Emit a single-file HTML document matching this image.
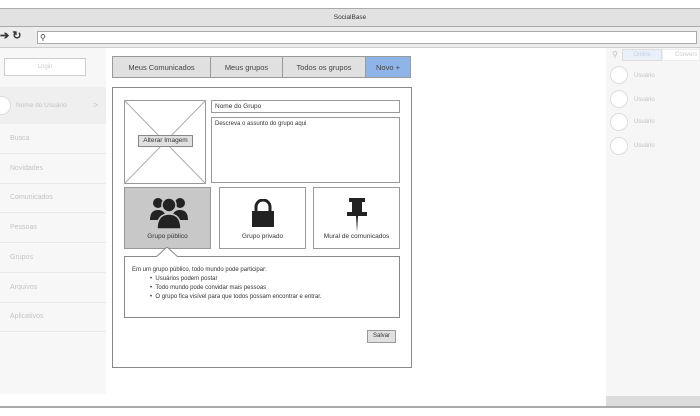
<!DOCTYPE html>
<html><head><style>
*{box-sizing:border-box;margin:0;padding:0}
body{width:700px;height:416px;background:#fff;font-family:"Liberation Sans",sans-serif;position:relative;overflow:hidden;font-size:7px;color:#333}
.a{position:absolute}
.side div.it{position:absolute;left:0;width:106px;height:30px;border-bottom:1px solid #eaeaea;color:#c4c4c4;font-size:7px;padding-left:10px;line-height:30px}
.tab{position:absolute;top:56px;height:22px;border:1px solid #999;background:#e0e0e0;text-align:center;line-height:21px;font-size:7.5px;color:#444}
.card{position:absolute;top:187px;height:62px;border:1px solid #999;background:#fff;text-align:center;font-size:6.5px;color:#333}
.card span{position:absolute;left:0;right:0;bottom:8px}
.u{position:absolute;left:610px;width:18px;height:18px;border:1px solid #ddd;border-radius:50%;background:#fff}
.ut{position:absolute;left:634px;color:#c4c4c4;font-size:6px}
</style></head><body>
<div class="a" style="left:0;top:8px;width:700px;height:19px;background:#e2e2e2;border-top:1px solid #aaa;border-bottom:1px solid #aaa;text-align:center;font-size:6.5px;line-height:18px">SocialBase</div>
<div class="a" style="left:0;top:27px;width:700px;height:21px;background:#ececec;border-bottom:1px solid #ccc"></div>
<div class="a" style="left:0;top:30px;font-size:11px;font-weight:bold;line-height:12px">➔ ↻</div>
<div class="a" style="left:37px;top:31px;width:660px;height:13px;border:1px solid #aaa;background:#fff;font-size:8px;padding-left:2px;line-height:11px">⚲</div>
<div class="a side" style="left:0;top:48px;width:106px;height:346px;background:#f7f7f7">
<div class="a" style="left:4px;top:10px;width:82px;height:18px;border:1px solid #ccc;background:#fff;color:#ccc;text-align:center;line-height:16px;font-size:6px">Login</div>
<div class="a" style="left:0;top:39px;width:106px;height:37px;background:#efefef;color:#c4c4c4;font-size:6.5px;line-height:37px;padding-left:16px">Nome do Usuário<span style="position:absolute;left:93px;font-size:9px">&gt;</span></div>
<div class="a" style="left:-8px;top:48px;width:19px;height:19px;border-radius:50%;background:#fff;border:1px solid #ddd"></div>
<div class="it" style="top:76px">Busca</div>
<div class="it" style="top:106px">Novidades</div>
<div class="it" style="top:135px">Comunicados</div>
<div class="it" style="top:165px">Pessoas</div>
<div class="it" style="top:195px">Grupos</div>
<div class="it" style="top:225px">Arquivos</div>
<div class="it" style="top:254px">Aplicativos</div>
</div>
<div class="a" style="left:606px;top:48px;width:94px;height:348px;background:#f6f6f6"></div>
<div class="a" style="left:612px;top:50px;color:#bbb;font-size:8px">⚲</div>
<div class="a" style="left:622px;top:49px;width:40px;height:12px;background:#eaf0fa;border:1px solid #ddd;color:#c4d0e4;font-size:6px;text-align:center;line-height:10px">Online</div>
<div class="a" style="left:662px;top:49px;width:38px;height:12px;background:#fff;border:1px solid #eee;color:#ccc;font-size:6px;padding-left:12px;line-height:10px">Convers</div>
<div class="u" style="top:66px"></div><div class="ut" style="top:73px">Usuário</div>
<div class="u" style="top:90px"></div><div class="ut" style="top:97px">Usuário</div>
<div class="u" style="top:113px"></div><div class="ut" style="top:119px">Usuário</div>
<div class="u" style="top:137px"></div><div class="ut" style="top:143px">Usuário</div>
<div class="a" style="left:606px;top:396px;width:94px;height:10px;background:#dcdcdc"></div>
<div class="a" style="left:0;top:406px;width:700px;height:2px;background:#aaa"></div>
<div class="tab" style="left:112px;width:99px">Meus Comunicados</div>
<div class="tab" style="left:210px;width:73px">Meus grupos</div>
<div class="tab" style="left:282px;width:84px">Todos os grupos</div>
<div class="tab" style="left:365px;width:46px;background:#8fb4e8">Novo +</div>
<div class="a" style="left:112px;top:87px;width:300px;height:281px;border:1px solid #888;background:#fff"></div>
<svg class="a" style="left:124px;top:100px" width="82" height="84"><rect x=".5" y=".5" width="81" height="83" fill="#fff" stroke="#999"/><line x1="0" y1="0" x2="82" y2="84" stroke="#aaa"/><line x1="82" y1="0" x2="0" y2="84" stroke="#aaa"/></svg>
<div class="a" style="left:138px;top:135px;width:55px;height:12px;background:#e0e0e0;border:1px solid #888;font-size:6.5px;text-align:center;line-height:10px">Alterar Imagem</div>
<div class="a" style="left:211px;top:100px;width:189px;height:13px;border:1px solid #999;font-size:6.5px;padding-left:3px;line-height:11px">Nome do Grupo</div>
<div class="a" style="left:211px;top:117px;width:189px;height:66px;border:1px solid #999;font-size:6px;padding:3px">Descreva o assunto do grupo aqui</div>
<div class="card" style="left:124px;width:87px;background:#c8c8c8">
<svg style="position:absolute;left:25px;top:8px" width="38" height="34" fill="#222"><circle cx="8" cy="7" r="5"/><circle cx="30" cy="7" r="5"/><path d="M0 24 Q0 14 8 14 Q16 14 16 24Z M22 24 Q22 14 30 14 Q38 14 38 24Z"/><circle cx="19" cy="9" r="7" stroke="#c8c8c8" stroke-width="1.5"/><path d="M7 33 Q7 18 19 18 Q31 18 31 33Z" stroke="#c8c8c8" stroke-width="1.5"/></svg>
<span>Grupo público</span></div>
<div class="card" style="left:219px;width:87px">
<svg style="position:absolute;left:31px;top:11px" width="24" height="28"><path d="M5 13 V8 A7 7 0 0 1 19 8 V13" fill="none" stroke="#222" stroke-width="3"/><rect x="1" y="12" width="22" height="16" fill="#222"/></svg>
<span>Grupo privado</span></div>
<div class="card" style="left:313px;width:87px">
<svg style="position:absolute;left:31px;top:10px" width="24" height="34" fill="#222"><rect x="4" y="0" width="16" height="4"/><rect x="7" y="4" width="10" height="10"/><rect x="2" y="14" width="20" height="4"/><path d="M11 18 L13 18 L12 34Z"/></svg>
<span>Mural de comunicados</span></div>
<div class="a" style="left:124px;top:256px;width:276px;height:62px;border:1px solid #888;background:#fff;font-size:6px;padding:9px 0 0 7px;line-height:9px">
Em um grupo público, todo mundo pode participar:
<div style="padding-left:18px">• &nbsp;Usuários podem postar<br>• &nbsp;Todo mundo pode convidar mais pessoas<br>• &nbsp;O grupo fica visível para que todos possam encontrar e entrar.</div></div>
<svg class="a" style="left:156px;top:247px" width="22" height="10"><path d="M0 10 L11 0 L22 10" fill="#fff" stroke="#888"/></svg>
<div class="a" style="left:367px;top:330px;width:29px;height:13px;background:#e0e0e0;border:1px solid #999;font-size:6px;text-align:center;line-height:11px">Salvar</div>
</body></html>
